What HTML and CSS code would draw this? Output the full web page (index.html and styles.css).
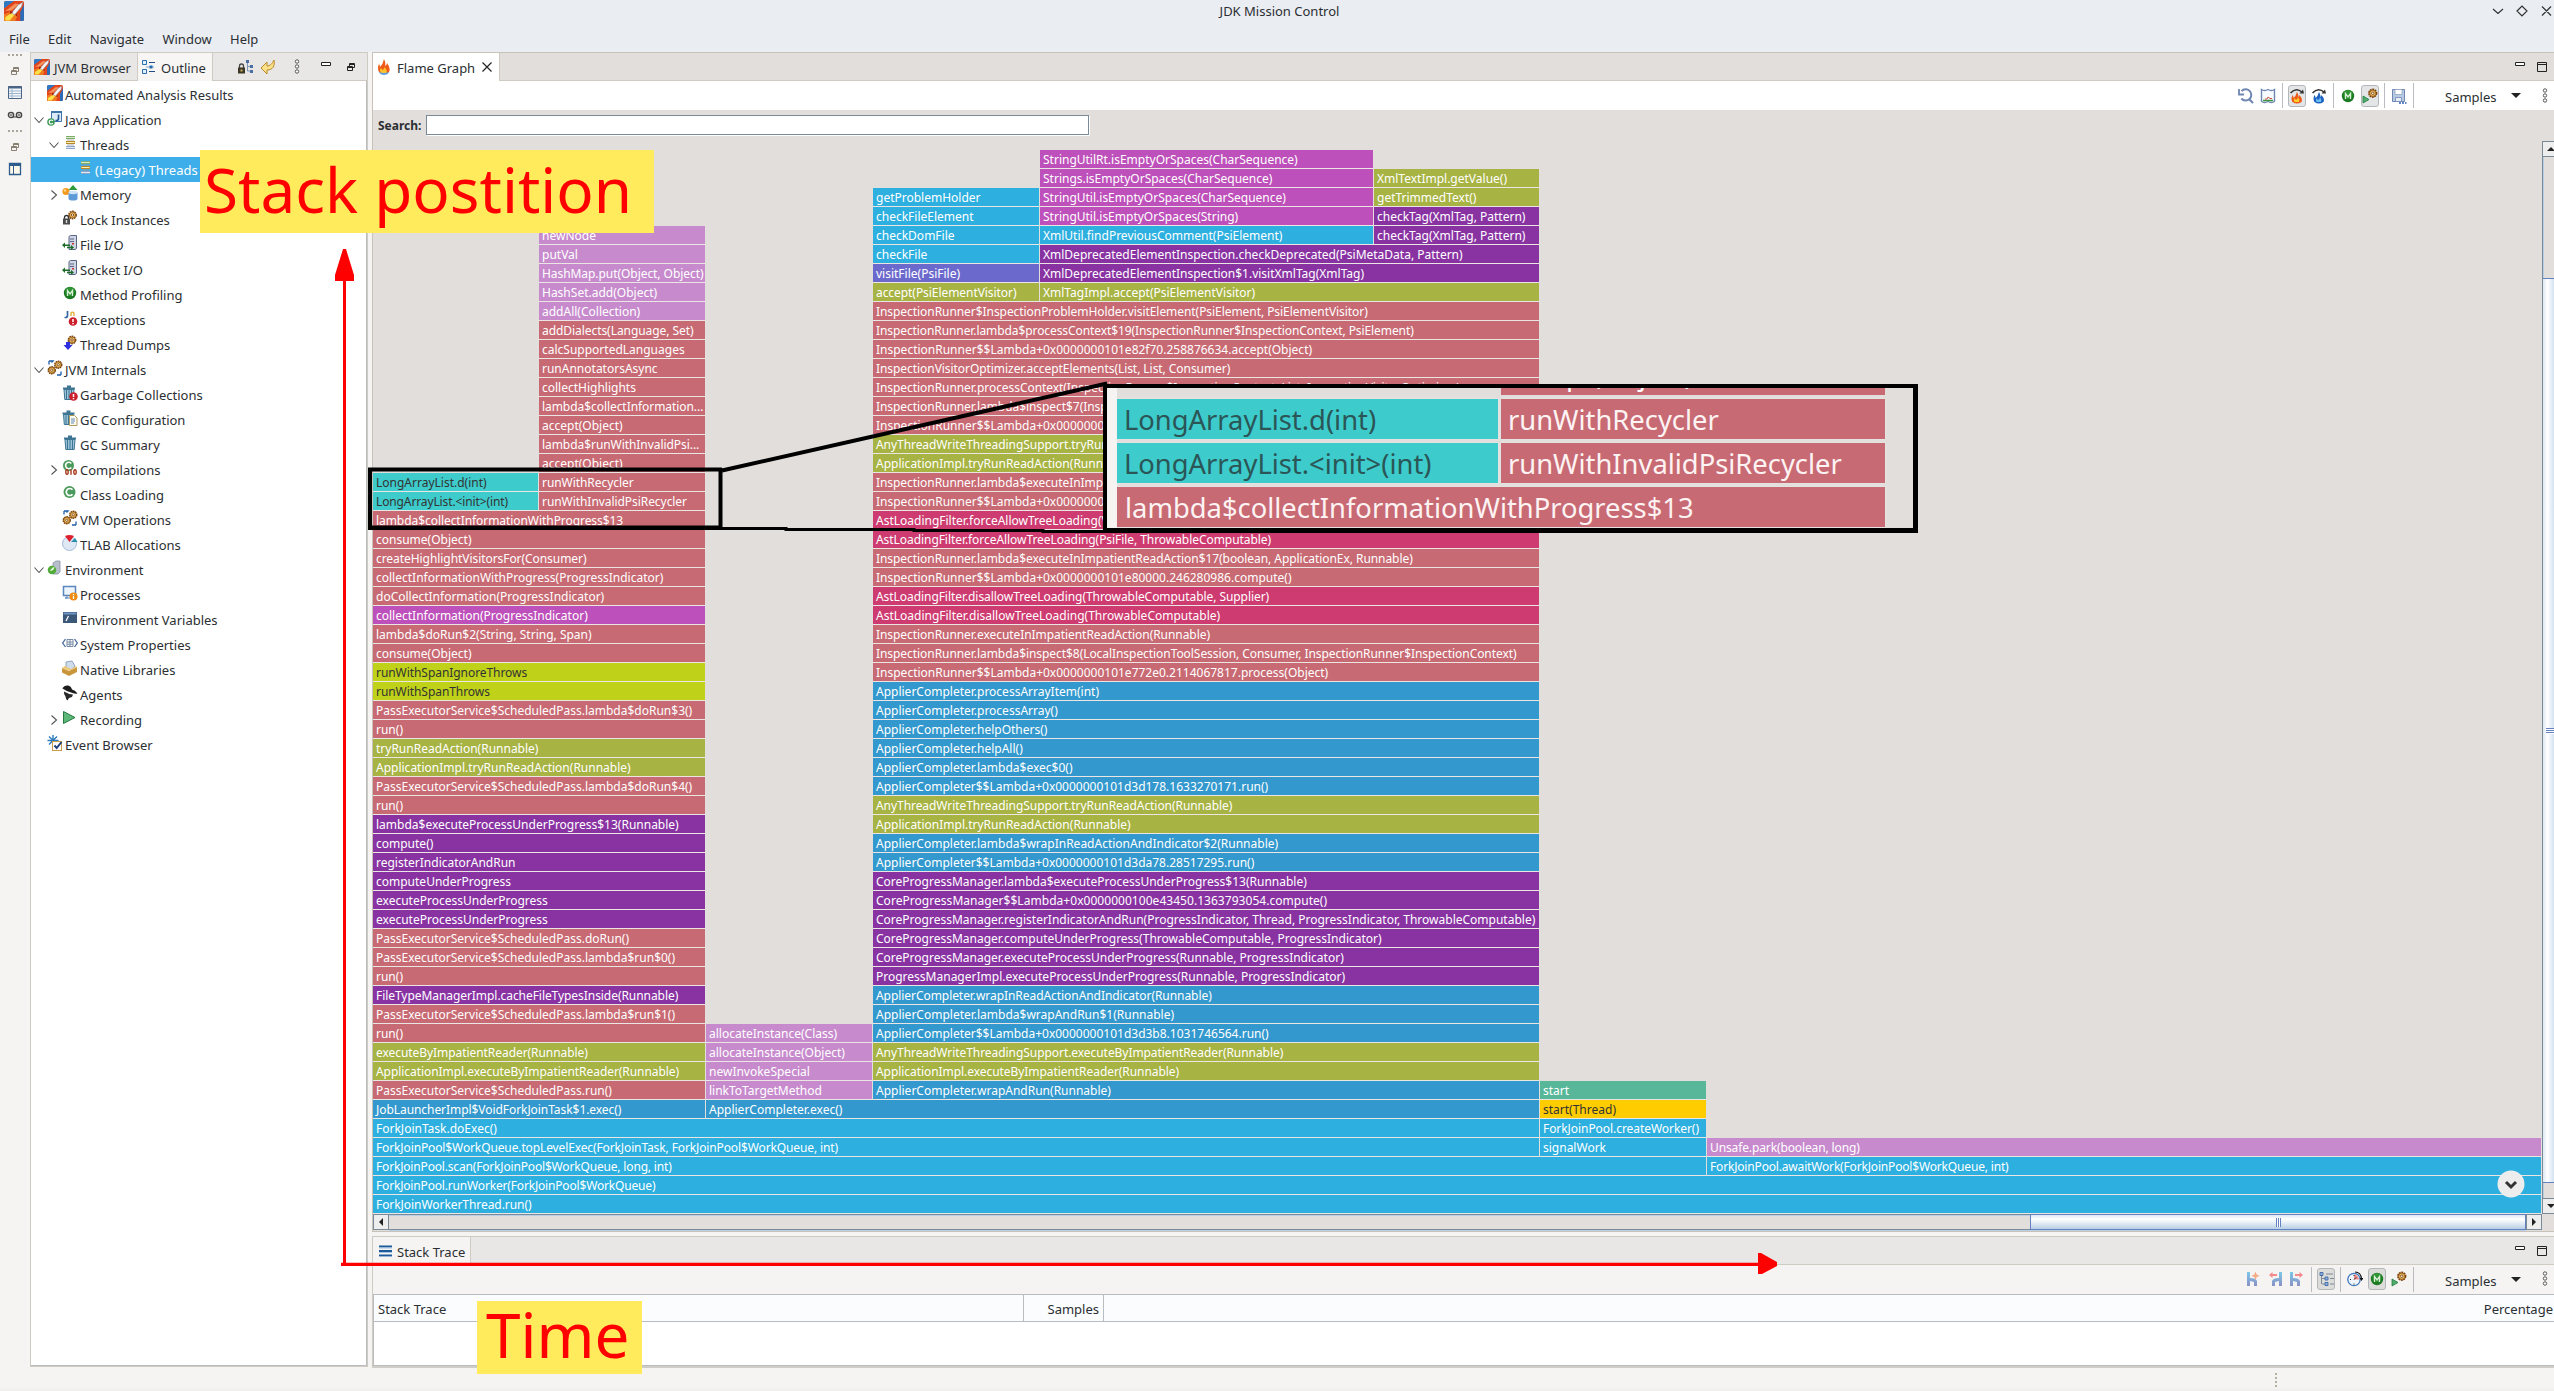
FILE: index.html
```html
<!DOCTYPE html>
<html lang="en">
<head>
<meta charset="utf-8">
<title>JDK Mission Control</title>
<link rel="stylesheet" href="styles.css">
</head>
<body>
<svg class="defs" width="0" height="0">
  <defs>
    <linearGradient id="gFork" x1="0" y1="0" x2="0" y2="1"><stop offset="0" stop-color="#7cc8e8"/><stop offset="1" stop-color="#8a90c4"/></linearGradient>
    <symbol id="rocket" viewBox="0 0 16 16"><rect width="16" height="16" rx="1.500" fill="#e2441c"/><path d="M0 6V1.500Q0 0 1.500 0H8z" fill="#2f79c4"/><path d="M16 3v11.500q0 1.500-1.500 1.500H13V9z" fill="#2a6cb8"/><path d="M1 8l8-6 3 .5-6 5z" fill="#f4925a"/><path d="M0 16v-5.500L7 8l4 3-2 5z" fill="#f07a1e"/><path d="M1 15.500v-2.500l6-4 1 2.500-3.500 4z" fill="#fde04a"/><path d="M6 9.500L11.500 3l3.500-2-1 3.500-5.500 6.500z" fill="#f4f5f8" stroke="#8a8f9c" stroke-width=".5"/><path d="M5 8l2.500.5-2.500 2zM9 11l1.500-1v2.500z" fill="#9a1c12"/></symbol>
    <symbol id="outline" viewBox="0 0 16 16"><path d="M1.500 1.500h4v4h-4zM1.500 10.500h4v4h-4z" fill="#e4f0fa" stroke="#2a6db0"/><path d="M8 3.500h6M8 12.500h6" stroke="#1f4e86" stroke-width="1.200"/><path d="M5 8h8" stroke="#7ea6cf"/><path d="M8.500 6.500h3v3h-3z" fill="#2a6db0"/></symbol>
    <symbol id="locktree" viewBox="0 0 16 16"><path d="M9.500 1v11M9.500 7.500h3M9.500 12h3" stroke="#7a96b8" fill="none"/><path d="M8 1h3v3H8zM12 6h3v3h-3zM12 11h3v3h-3z" fill="#4a6fa5"/><path d="M1.500 9V7a2 2 0 0 1 4 0v2" fill="none" stroke="#444" stroke-width="1.300"/><rect x="0" y="8.500" width="7" height="6" fill="#3c3627"/><rect x="2.500" y="10.500" width="2" height="2" fill="#c9b25c"/></symbol>
    <symbol id="linkback" viewBox="0 0 16 16"><path d="M14 1c1 6-1 10-7 10v4L1 9l6-6v4c3 0 5-2 7-6z" fill="#fbe08a" stroke="#b98a2a"/></symbol>
    <symbol id="kebab" viewBox="0 0 6 16"><g fill="#fff" stroke="#555" stroke-width="1"><circle cx="3" cy="2.500" r="1.700"/><circle cx="3" cy="7.500" r="1.700"/><circle cx="3" cy="12.500" r="1.700"/></g></symbol>
    <symbol id="min" viewBox="0 0 10 10"><path d="M.5.500h9v3h-9z" fill="#fff" stroke="#222"/></symbol>
    <symbol id="max" viewBox="0 0 10 10"><path d="M.5.500h9v9h-9zM.5 2.500h9" fill="none" stroke="#222"/></symbol>
    <symbol id="restore" viewBox="0 0 8 8"><path d="M2.500 3V.5h5v4H6M2.500 1.500h5" fill="none" stroke="currentColor"/><path d="M.5 3.500h5v4h-5zM.5 4.500h5" fill="none" stroke="currentColor"/></symbol>
    <symbol id="table" viewBox="0 0 16 16"><path d="M1.500 1.500h13v12h-13z" fill="#f4f8fc" stroke="#4a6484"/><path d="M1 2.500h14" stroke="#4a6484" stroke-width="2"/><path d="M2 6h12M2 8.500h12M2 11h12M5 3v10" stroke="#9db4cd"/></symbol>
    <symbol id="layout" viewBox="0 0 16 16"><path d="M2.500 2.500h11v11h-11z" fill="#fdf8ea" stroke="#2e5c8c" stroke-width="1.300"/><path d="M2 4h12" stroke="#2e5c8c" stroke-width="2"/><path d="M6.500 4v9" stroke="#2e5c8c"/></symbol>
    <symbol id="glasses" viewBox="0 0 16 16"><circle cx="4" cy="8" r="2.600" fill="#ddd" stroke="#444" stroke-width="1.400"/><circle cx="12" cy="8" r="2.600" fill="#ddd" stroke="#444" stroke-width="1.400"/><path d="M3 8h2M11 8h2M6 10h4" stroke="#444"/></symbol>
    <symbol id="down" viewBox="0 0 10 10"><path d="M.5 2.500l4.500 5 4.500-5" fill="none" stroke="#555" stroke-width="1.100"/></symbol>
    <symbol id="right" viewBox="0 0 10 10"><path d="M2.500.5l5 4.500-5 4.500" fill="none" stroke="#555" stroke-width="1.100"/></symbol>
    <symbol id="japp" viewBox="0 0 16 16"><path d="M4.500 1.500h10v10h-10z" fill="#dcebf8" stroke="#3f74ab"/><path d="M4 2h11" stroke="#3f74ab" stroke-width="2"/><path d="M11.500 4.500v4q0 2-2 2h-1" fill="none" stroke="#1f5590" stroke-width="1.600"/><circle cx="4" cy="12" r="3.800" fill="#3c9a56"/><path d="M5.800 10.800a2 2 0 1 0 0 2.400" fill="none" stroke="#fff" stroke-width="1.100"/></symbol>
    <symbol id="threads" viewBox="0 0 16 16"><rect x="4" y="1" width="9" height="3" fill="#7dac6e"/><path d="M4 2.500h9" stroke="#d6ebc4"/><rect x="4" y="6" width="9" height="3" fill="#b78a28"/><path d="M4.500 7.500h8" stroke="#fff2b4"/><rect x="4" y="11" width="9" height="3" fill="#8ea4c8"/><path d="M4 12.500h9" stroke="#dfe8f5"/><path d="M5 5h7M5 10h7" stroke="#999" stroke-width=".8"/></symbol>
    <symbol id="memory" viewBox="0 0 16 16"><circle cx="4" cy="6.500" r="3.600" fill="#f39a1e"/><circle cx="3" cy="5.500" r="1.200" fill="#fcd48a"/><path d="M11 0l4.500 5h-9z" fill="#2f9a3c"/><path d="M6.500 7.500v6q0 2 4.500 2t4.500-2v-6z" fill="#5d9bd8"/><ellipse cx="11" cy="7.500" rx="4.500" ry="1.700" fill="#cfe4f8"/></symbol>
    <symbol id="gear" viewBox="0 0 10 10"><circle cx="5" cy="5" r="3.600" fill="#f0b95a" stroke="#7a4510" stroke-width="1.700" stroke-dasharray="1.700 .6"/><circle cx="5" cy="5" r="2.900" fill="#f6c468" stroke="#8a5216" stroke-width=".7"/><circle cx="5" cy="5" r="1.200" fill="#fff" stroke="#7a4510" stroke-width=".9"/></symbol>
    <symbol id="lock" viewBox="0 0 16 16"><use href="#gear" x="5.500" y="0" width="10" height="10"/><path d="M2.500 9V7.500a2 2 0 0 1 4 0V9" fill="none" stroke="#333" stroke-width="1.300"/><rect x="1" y="8.500" width="7" height="6" fill="#4b4b4b"/><path d="M4.500 10v3" stroke="#ddd" stroke-width="1.400"/></symbol>
    <symbol id="fileio" viewBox="0 0 16 16"><path d="M7 1.500l1.500-1h6v13l-1.500 1H7z" fill="#cfd5e2" stroke="#5a6688"/><path d="M8 4h4M8 6.500h4" stroke="#5a6688"/><rect x="10" y="8" width="2" height="1.500" fill="#d03030"/><path d="M0 10l3-2.500v2h5v1.500H3v2zM12 12.500L9 10v1.800H5v1.500h4V15z" fill="#1f6b2a"/></symbol>
    <symbol id="meth" viewBox="0 0 16 16"><circle cx="8" cy="8" r="6.200" fill="#1c7a22"/><circle cx="8" cy="6.500" r="4.500" fill="#2f9433"/><path d="M5.500 11V5.500L8 9l2.500-3.500V11" fill="none" stroke="#d9f0d6" stroke-width="1.300"/></symbol>
    <symbol id="exc" viewBox="0 0 16 16"><path d="M5.500 1v4.500q0 2-2 2H2.500" fill="none" stroke="#3567a5" stroke-width="1.700"/><path d="M9 6V3q1.500-1.800 3 0v3" fill="none" stroke="#e0b23c" stroke-width="1.400"/><circle cx="11" cy="11.500" r="4.300" fill="#cc1f2c"/><path d="M11 9v3M11 13v1.200" stroke="#fff" stroke-width="1.500"/></symbol>
    <symbol id="dump" viewBox="0 0 16 16"><use href="#gear" x="5" y="0" width="10" height="10"/><path d="M4 7h4v3h2.500L6 15 1.500 10H4z" fill="#2d2fe0"/></symbol>
    <symbol id="gears" viewBox="0 0 16 16"><use href="#gear" x="6.500" y="0" width="9.500" height="9.500"/><use href="#gear" x="0" y="5.500" width="9.500" height="9.500"/><path d="M2 1h4L4.500 2.500M2 1v3.500M14 15h-4M14 15v-3.500" fill="none" stroke="#1f5ea8" stroke-width="1.300"/></symbol>
    <symbol id="trash" viewBox="0 0 16 16"><path d="M3 4.500h10l-.8 10H3.800z" fill="#9cc3da" stroke="#3d7592"/><path d="M5.500 5v9M8 5v9M10.500 5v9" stroke="#3d7592"/><path d="M2 3.500h12M6 1.500h4" stroke="#3d7592" stroke-width="1.800"/></symbol>
    <symbol id="gc" viewBox="0 0 16 16"><use href="#trash" x="-1" width="16" height="16"/><circle cx="11.500" cy="11.500" r="4.300" fill="#cc1f2c"/><path d="M11.500 9v3M11.500 13v1.200" stroke="#fff" stroke-width="1.500"/></symbol>
    <symbol id="gcconf" viewBox="0 0 16 16"><use href="#trash" x="-1.500" width="16" height="16"/><path d="M7.500 5.500h5l2.500 2.500v7.500H7.500z" fill="#fffdf2" stroke="#b09a5c"/><path d="M9 9h4M9 11h4M9 13h3" stroke="#5e86b8"/></symbol>
    <symbol id="cls" viewBox="0 0 16 16"><circle cx="7.500" cy="7" r="6" fill="#4a9a5c"/><path d="M10.500 4.800a3.500 3.500 0 1 0 0 4.400" fill="none" stroke="#fff" stroke-width="1.700"/></symbol>
    <symbol id="comp" viewBox="0 0 16 16"><circle cx="6.500" cy="5.500" r="5.500" fill="#4a9a5c"/><path d="M9.300 3.500a3.200 3.200 0 1 0 0 4" fill="none" stroke="#fff" stroke-width="1.600"/><g fill="#fff" stroke="#a63a1e" stroke-width="1.400"><ellipse cx="5" cy="12" rx="1.200" ry="2.300"/><path d="M9 9.500v5.300"/><ellipse cx="13" cy="12" rx="1.200" ry="2.300"/></g></symbol>
    <symbol id="tlab" viewBox="0 0 16 16"><circle cx="7.500" cy="8.500" r="7" fill="#dfe9f6" stroke="#8fabcf" stroke-width=".8"/><path d="M7.500 7L3 1q4.500-2 9 0z" fill="#dc1f2c"/><path d="M9 7l4-4 2.500 4z" fill="#2b8fae"/></symbol>
    <symbol id="env" viewBox="0 0 16 16"><path d="M6 3l3-2h4v11l-2 2H6z" fill="#b8bfcc" stroke="#8890a0" stroke-width=".8"/><circle cx="5" cy="10" r="4.300" fill="#52ac3a"/><path d="M3 11q2-4 4.500-4-.5 4-4.500 4z" fill="#e4f5d8"/></symbol>
    <symbol id="proc" viewBox="0 0 16 16"><path d="M1.500 1.500h12v9h-12z" fill="#eef4fb" stroke="#5a86bd" stroke-width="1.500"/><path d="M5 11v2H3h5" stroke="#5a86bd" fill="none"/><circle cx="11.500" cy="11.500" r="4" fill="#ef8a12"/><path d="M11.500 9v1.200M11.500 11v3" stroke="#fff" stroke-width="1.300"/></symbol>
    <symbol id="term" viewBox="0 0 16 16"><path d="M1 2h14v11H1z" fill="#3c5878"/><path d="M1.500 2.500h13v2h-13z" fill="#6f94c4"/><path d="M4 11l2.500-5" stroke="#fff" stroke-width="1.200"/></symbol>
    <symbol id="sysp" viewBox="0 0 16 16"><path d="M3.500 4L.7 8l2.800 4M12.500 4l2.800 4-2.800 4" fill="none" stroke="#4c6e9c" stroke-width="1.300"/><path d="M5 4.500h6v7H5zM5 7h6M5 9.200h6M8 4.500v7" fill="#fff" stroke="#6a7f9c" stroke-width=".9"/></symbol>
    <symbol id="native" viewBox="0 0 16 16"><path d="M4 2l6-1 3 5-4 4-5-2z" fill="#cfdcea" stroke="#7a94b4" stroke-width=".8"/><path d="M0 8l7 3 8-4v5l-8 4-7-3.500z" fill="#c9963c"/><path d="M0 8l3-2 6 3 5-3 1 1-8 4z" fill="#edc97c"/></symbol>
    <symbol id="agent" viewBox="0 0 16 16"><path d="M1 2.500Q3 0 6 .5q3 .5 4 4 3 .5 5.500 4-2 .5-5-.5-5-1-10-4.500z" fill="#1c1c1c"/><path d="M2 6.500q4 2.500 9 3l-1 2.500-3 1-1.500 2.500q-2-1.500-2-4-2-2-1.500-5z" fill="#2a2a2a"/></symbol>
    <symbol id="rec" viewBox="0 0 16 16"><path d="M1.500 1.500L13 7.500l-11.500 6z" fill="#5cb878" stroke="#257a42"/></symbol>
    <symbol id="evb" viewBox="0 0 16 16"><path d="M6 0v11M.5 5.500h11M2 1.500l8 8M10 1.500l-8 8" stroke="#2d7bbd" stroke-width="1.400"/><rect x="5.500" y="6.500" width="9" height="9" fill="#fff" stroke="#c99b4a"/><path d="M7.500 10.500l2.200 2.500L14.500 7" fill="none" stroke="#1f3f7a" stroke-width="2"/></symbol>
    <symbol id="flame" viewBox="0 0 16 16"><path d="M8 0q2 4 1 7 2-1 2-3 4 5 2 9-5 4-10 0-2-4 0-8 1 1 1 3 3-3 4-8z" fill="#ee5a1a"/><path d="M5 14q-2-3 0-5l1.500 2q2-1 2-3 3 3 2 6z" fill="#fcc12c"/><path d="M3 13q5 2 10 0-1 3-5 3t-5-3z" fill="#5f9fe0"/></symbol>
    <symbol id="flamef" viewBox="0 0 16 16"><path d="M8 4q2 3 1 5 1.500-1 1.500-2 3.500 4 2 7-4.500 3-9 0-2-3 0-7 1 1 1 3 2.500-2 3.500-6z" fill="#ee5a1a"/><path d="M5.500 14q-1-2 0-4l1.500 2q2-1 2-3 2 3 1 5z" fill="#fcd02c"/><path d="M1.500 5Q7-1 13 4" fill="none" stroke="#333" stroke-width="1.600"/><path d="M15 5.500l-4.500 0L14 1.500z" fill="#333"/></symbol>
    <symbol id="flameb" viewBox="0 0 16 16"><path d="M8 4q2 3 1 5 1.500-1 1.500-2 3.500 4 2 7-4.500 3-9 0-2-3 0-7 1 1 1 3 2.500-2 3.500-6z" fill="#1d62c0"/><path d="M5.500 14q-1-2 0-4l1.500 2q2-1 2-3 2 3 1 5z" fill="#6dbcf4"/><path d="M1.500 5Q7-1 13 4" fill="none" stroke="#333" stroke-width="1.600"/><path d="M15 5.500l-4.500 0L14 1.500z" fill="#333"/></symbol>
    <symbol id="reset" viewBox="0 0 16 16"><path d="M3.500 3.200A5.600 5.600 0 1 1 3.400 10.500" fill="none" stroke="#6f86b2" stroke-width="2"/><path d="M1 1v5.500h5" fill="none" stroke="#6f86b2" stroke-width="1.800"/><path d="M11 11l4 4" stroke="#6f86b2" stroke-width="2.200"/></symbol>
    <symbol id="map" viewBox="0 0 16 16"><path d="M1.500 1.500q3 2 6.500 0 3.500 2 6.500 0v12q-3 2-6.500 0-3.500 2-6.500 0z" fill="#f8fafd" stroke="#6f86b2" stroke-width="1.400"/><path d="M3 12.500h10" stroke="#3b9440" stroke-width="1.500"/><path d="M5 11h2l1-2 2 1.500h2" fill="none" stroke="#cc5544"/></symbol>
    <symbol id="rungear" viewBox="0 0 16 16"><use href="#gear" x="5.500" y="0" width="10.500" height="10.500"/><path d="M1 8l6 3.500L1 15z" fill="#4fae6e" stroke="#1f7a3c" stroke-width=".8"/></symbol>
    <symbol id="save" viewBox="0 0 16 16"><path d="M1.500 1.500h12v12h-12z" fill="#b9cbe2" stroke="#6f86b2"/><path d="M4 1.500h7v5H4z" fill="#fff" stroke="#8fa2c2" stroke-width=".8"/><path d="M4.500 9.500h6v4h-6z" fill="#e8eef6" stroke="#6f86b2" stroke-width=".8"/><path d="M8 15h7.500" stroke="#2f5fb5" stroke-width="1.600" stroke-dasharray="2 1"/></symbol>
    <symbol id="fork1" viewBox="0 0 16 16"><path d="M1 1h3v6q6 0 7 3v5H8v-4L4 10v5H1z" fill="url(#gFork)"/><path d="M9.500.5l1.200 3 3 1.200-3 1.200-1.200 3-1.200-3-3-1.200 3-1.200z" fill="#f8aa84"/></symbol>
    <symbol id="fork2" viewBox="0 0 16 16"><path d="M14 1h-3v6q-6 0-7 3v5h3v-4l4-1v5h3z" fill="url(#gFork)"/><path d="M1 4l3.500-3v2H9v2H4.500v2z" fill="#f48a8a"/></symbol>
    <symbol id="fork3" viewBox="0 0 16 16"><path d="M1 1h3v6q6 0 7 3v5H8v-4L4 10v5H1z" fill="url(#gFork)"/><path d="M14 4l-3.500-3v2H6v2h4.500v2z" fill="#f48a8a"/></symbol>
    <symbol id="treev" viewBox="0 0 16 16"><path d="M3.500 3v10M4 7.500h4M4 13h4M8 3h7M12 7.500h4M12 13h4" stroke="#7d8896" fill="none"/><path d="M2 1.500h3v3H2zM7 6h3v3H7zM7 11.500h3v3H7z" fill="#8fb0dc" stroke="#3f69a6" stroke-width=".9"/></symbol>
    <symbol id="clock" viewBox="0 0 16 16"><circle cx="7" cy="8.500" r="6.200" fill="#eef5fc" stroke="#3f78bd" stroke-width="1.300"/><path d="M7 8.500V3.500q4 0 5 5z" fill="#ee8a8a"/><path d="M7 4v1M7 12.500v1M3 8.500h1M7 8.500l2-2" stroke="#222"/><path d="M8 1q6 0 6.500 7" fill="none" stroke="#111" stroke-width="1.200"/><path d="M12.500 7h4l-2 3z" fill="#111"/></symbol>
  </defs>
</svg>

<header class="titlebar">
  <svg class="appicon"><use href="#rocket"/></svg>
  <span class="title">JDK Mission Control</span>
  <svg class="winbtns" viewBox="0 0 60 12"><path d="M1 4l5 4.500L11 4M25 6l5-5 5 5-5 5zM50 1.500l9 9M59 1.500l-9 9" fill="none" stroke="#333" stroke-width="1.200"/></svg>
</header>
<nav class="menubar"><span>File</span><span>Edit</span><span>Navigate</span><span>Window</span><span>Help</span></nav>

<div class="workbench">
  <aside class="trim">
    <i class="grip"></i>
    <svg class="s8"><use href="#restore"/></svg>
    <svg class="s16"><use href="#table"/></svg>
    <svg class="s16"><use href="#glasses"/></svg>
    <i class="grip"></i>
    <svg class="s8"><use href="#restore"/></svg>
    <svg class="s16"><use href="#layout"/></svg>
  </aside>

  <section class="outline">
    <div class="tabs">
      <div class="tab jvm"><svg class="i16"><use href="#rocket"/></svg><span>JVM Browser</span></div>
      <div class="tab on"><svg class="i16"><use href="#outline"/></svg><span>Outline</span></div>
      <div class="acts">
        <svg class="i16"><use href="#locktree"/></svg>
        <svg class="i16"><use href="#linkback"/></svg>
        <svg class="keb"><use href="#kebab"/></svg>
        <svg class="mm up"><use href="#min"/></svg>
        <svg class="s8"><use href="#restore"/></svg>
      </div>
    </div>
    <ul class="tree">
      <li class="l1"><b></b><svg class="i16"><use href="#rocket"/></svg>Automated Analysis Results</li>
      <li class="l1"><b><svg><use href="#down"/></svg></b><svg class="i16"><use href="#japp"/></svg>Java Application</li>
      <li class="l2"><b><svg><use href="#down"/></svg></b><svg class="i16"><use href="#threads"/></svg>Threads</li>
      <li class="l3 sel"><b></b><svg class="i16"><use href="#threads"/></svg>(Legacy) Threads</li>
      <li class="l2"><b><svg><use href="#right"/></svg></b><svg class="i16"><use href="#memory"/></svg>Memory</li>
      <li class="l2"><b></b><svg class="i16"><use href="#lock"/></svg>Lock Instances</li>
      <li class="l2"><b></b><svg class="i16"><use href="#fileio"/></svg>File I/O</li>
      <li class="l2"><b></b><svg class="i16"><use href="#fileio"/></svg>Socket I/O</li>
      <li class="l2"><b></b><svg class="i16"><use href="#meth"/></svg>Method Profiling</li>
      <li class="l2"><b></b><svg class="i16"><use href="#exc"/></svg>Exceptions</li>
      <li class="l2"><b></b><svg class="i16"><use href="#dump"/></svg>Thread Dumps</li>
      <li class="l1"><b><svg><use href="#down"/></svg></b><svg class="i16"><use href="#gears"/></svg>JVM Internals</li>
      <li class="l2"><b></b><svg class="i16"><use href="#gc"/></svg>Garbage Collections</li>
      <li class="l2"><b></b><svg class="i16"><use href="#gcconf"/></svg>GC Configuration</li>
      <li class="l2"><b></b><svg class="i16"><use href="#trash"/></svg>GC Summary</li>
      <li class="l2"><b><svg><use href="#right"/></svg></b><svg class="i16"><use href="#comp"/></svg>Compilations</li>
      <li class="l2"><b></b><svg class="i16"><use href="#cls"/></svg>Class Loading</li>
      <li class="l2"><b></b><svg class="i16"><use href="#gears"/></svg>VM Operations</li>
      <li class="l2"><b></b><svg class="i16"><use href="#tlab"/></svg>TLAB Allocations</li>
      <li class="l1"><b><svg><use href="#down"/></svg></b><svg class="i16"><use href="#env"/></svg>Environment</li>
      <li class="l2"><b></b><svg class="i16"><use href="#proc"/></svg>Processes</li>
      <li class="l2"><b></b><svg class="i16"><use href="#term"/></svg>Environment Variables</li>
      <li class="l2"><b></b><svg class="i16"><use href="#sysp"/></svg>System Properties</li>
      <li class="l2"><b></b><svg class="i16"><use href="#native"/></svg>Native Libraries</li>
      <li class="l2"><b></b><svg class="i16"><use href="#agent"/></svg>Agents</li>
      <li class="l2"><b><svg><use href="#right"/></svg></b><svg class="i16"><use href="#rec"/></svg>Recording</li>
      <li class="l1"><b></b><svg class="i16"><use href="#evb"/></svg>Event Browser</li>
    </ul>
  </section>

  <main class="right">
    <section class="editor">
      <div class="tabs">
        <div class="tab on"><svg class="i16"><use href="#flame"/></svg><span>Flame Graph</span><svg class="x" viewBox="0 0 10 10"><path d="M.5.500l9 9M9.500.5l-9 9" stroke="#222" stroke-width="1.200"/></svg></div>
        <div class="acts"><svg class="mm up"><use href="#min"/></svg><svg class="mm"><use href="#max"/></svg></div>
      </div>
      <div class="toolbar">
        <div class="c"><svg class="i16"><use href="#reset"/></svg></div>
        <div class="c"><svg class="i16"><use href="#map"/></svg></div>
        <div class="sep"></div>
        <div class="c"><div class="btn"><svg class="i16"><use href="#flamef"/></svg></div></div>
        <div class="c"><svg class="i16"><use href="#flameb"/></svg></div>
        <div class="sep"></div>
        <div class="c"><svg class="i16"><use href="#meth"/></svg></div>
        <div class="c"><div class="btn"><svg class="i16"><use href="#rungear"/></svg></div></div>
        <div class="sep"></div>
        <div class="c"><svg class="i16"><use href="#save"/></svg></div>
        <div class="sep"></div>
        <div class="drop"><span>Samples</span><i></i></div>
        <svg class="keb"><use href="#kebab"/></svg>
      </div>
      <div class="search"><label>Search:</label><div class="field"></div></div>
      <div class="view">
        <div class="flame">
          <div class="row">
            <div class="stack" style="width:1334px">
              <div class="row">
                <div class="stack" style="width:1167px">
                  <div class="row">
                    <div class="stack" style="width:333px">
                      <div class="row">
                        <div class="stack" style="width:166px">
                          <p class="teal">LongArrayList.d(int)</p>
                          <p class="teal k2">LongArrayList.&lt;init&gt;(int)</p>
                        </div>
                        <div class="stack" style="width:167px">
                          <p class="lilac">newNode</p>
                          <p class="lilac">putVal</p>
                          <p class="lilac k1">HashMap.put(Object, Object)</p>
                          <p class="lilac">HashSet.add(Object)</p>
                          <p class="lilac">addAll(Collection)</p>
                          <p class="rose k1">addDialects(Language, Set)</p>
                          <p class="rose">calcSupportedLanguages</p>
                          <p class="rose">runAnnotatorsAsync</p>
                          <p class="rose">collectHighlights</p>
                          <p class="rose k1">lambda$collectInformation...</p>
                          <p class="rose">accept(Object)</p>
                          <p class="rose k1">lambda$runWithInvalidPsi...</p>
                          <p class="rose">accept(Object)</p>
                          <p class="rose k1">runWithRecycler</p>
                          <p class="rose k1">runWithInvalidPsiRecycler</p>
                        </div>
                      </div>
                      <p class="rose k1">lambda$collectInformationWithProgress$13</p>
                      <p class="rose">consume(Object)</p>
                      <p class="rose k1">createHighlightVisitorsFor(Consumer)</p>
                      <p class="rose">collectInformationWithProgress(ProgressIndicator)</p>
                      <p class="rose">doCollectInformation(ProgressIndicator)</p>
                      <p class="orchid">collectInformation(ProgressIndicator)</p>
                      <p class="rose">lambda$doRun$2(String, String, Span)</p>
                      <p class="rose">consume(Object)</p>
                      <p class="lime k1">runWithSpanIgnoreThrows</p>
                      <p class="lime k1">runWithSpanThrows</p>
                      <p class="rose">PassExecutorService$ScheduledPass.lambda$doRun$3()</p>
                      <p class="rose">run()</p>
                      <p class="olive">tryRunReadAction(Runnable)</p>
                      <p class="olive">ApplicationImpl.tryRunReadAction(Runnable)</p>
                      <p class="rose">PassExecutorService$ScheduledPass.lambda$doRun$4()</p>
                      <p class="rose">run()</p>
                      <p class="purple">lambda$executeProcessUnderProgress$13(Runnable)</p>
                      <p class="purple">compute()</p>
                      <p class="purple">registerIndicatorAndRun</p>
                      <p class="purple">computeUnderProgress</p>
                      <p class="purple">executeProcessUnderProgress</p>
                      <p class="purple">executeProcessUnderProgress</p>
                      <p class="rose">PassExecutorService$ScheduledPass.doRun()</p>
                      <p class="rose">PassExecutorService$ScheduledPass.lambda$run$0()</p>
                      <p class="rose">run()</p>
                      <p class="purple k1">FileTypeManagerImpl.cacheFileTypesInside(Runnable)</p>
                      <p class="rose">PassExecutorService$ScheduledPass.lambda$run$1()</p>
                      <p class="rose">run()</p>
                      <p class="olive k1">executeByImpatientReader(Runnable)</p>
                      <p class="olive k1">ApplicationImpl.executeByImpatientReader(Runnable)</p>
                      <p class="rose">PassExecutorService$ScheduledPass.run()</p>
                      <p class="blue k1">JobLauncherImpl$VoidForkJoinTask$1.exec()</p>
                    </div>
                    <div class="stack" style="width:834px">
                      <div class="row">
                        <div class="stack" style="width:167px">
                          <p class="lilac">allocateInstance(Class)</p>
                          <p class="lilac">allocateInstance(Object)</p>
                          <p class="lilac">newInvokeSpecial</p>
                          <p class="lilac">linkToTargetMethod</p>
                        </div>
                        <div class="stack" style="width:667px">
                          <div class="row">
                            <div class="stack" style="width:167px">
                              <p class="sky">getProblemHolder</p>
                              <p class="sky">checkFileElement</p>
                              <p class="sky">checkDomFile</p>
                              <p class="sky">checkFile</p>
                              <p class="slate">visitFile(PsiFile)</p>
                              <p class="olive k1">accept(PsiElementVisitor)</p>
                            </div>
                            <div class="stack" style="width:500px">
                              <div class="row">
                                <div class="stack" style="width:334px">
                                  <p class="orchid">StringUtilRt.isEmptyOrSpaces(CharSequence)</p>
                                  <p class="orchid">Strings.isEmptyOrSpaces(CharSequence)</p>
                                  <p class="orchid">StringUtil.isEmptyOrSpaces(CharSequence)</p>
                                  <p class="orchid">StringUtil.isEmptyOrSpaces(String)</p>
                                  <p class="sky">XmlUtil.findPreviousComment(PsiElement)</p>
                                </div>
                                <div class="stack" style="width:166px">
                                  <p class="olive">XmlTextImpl.getValue()</p>
                                  <p class="olive">getTrimmedText()</p>
                                  <p class="purple">checkTag(XmlTag, Pattern)</p>
                                  <p class="purple">checkTag(XmlTag, Pattern)</p>
                                </div>
                              </div>
                              <p class="purple">XmlDeprecatedElementInspection.checkDeprecated(PsiMetaData, Pattern)</p>
                              <p class="purple">XmlDeprecatedElementInspection$1.visitXmlTag(XmlTag)</p>
                              <p class="olive">XmlTagImpl.accept(PsiElementVisitor)</p>
                            </div>
                          </div>
                          <p class="rose k1">InspectionRunner$InspectionProblemHolder.visitElement(PsiElement, PsiElementVisitor)</p>
                          <p class="rose k15">InspectionRunner.lambda$processContext$19(InspectionRunner$InspectionContext, PsiElement)</p>
                          <p class="rose">InspectionRunner$$Lambda+0x0000000101e82f70.258876634.accept(Object)</p>
                          <p class="rose k1">InspectionVisitorOptimizer.acceptElements(List, List, Consumer)</p>
                          <p class="rose k1">InspectionRunner.processContext(InspectionRunner$InspectionContext, List, InspectionVisitorOptimizer)</p>
                          <p class="rose k1">InspectionRunner.lambda$inspect$7(InspectionRunner)</p>
                          <p class="rose">InspectionRunner$$Lambda+0x0000000101</p>
                          <p class="olive k1">AnyThreadWriteThreadingSupport.tryRunReadAction(Runnable)</p>
                          <p class="olive">ApplicationImpl.tryRunReadAction(Runnable)</p>
                          <p class="rose k1">InspectionRunner.lambda$executeInImpatientReadAction</p>
                          <p class="rose">InspectionRunner$$Lambda+0x0000000101</p>
                          <p class="pink">AstLoadingFilter.forceAllowTreeLoading(VirtualFile)</p>
                          <p class="pink k1">AstLoadingFilter.forceAllowTreeLoading(PsiFile, ThrowableComputable)</p>
                          <p class="rose k1">InspectionRunner.lambda$executeInImpatientReadAction$17(boolean, ApplicationEx, Runnable)</p>
                          <p class="rose">InspectionRunner$$Lambda+0x0000000101e80000.246280986.compute()</p>
                          <p class="pink k1">AstLoadingFilter.disallowTreeLoading(ThrowableComputable, Supplier)</p>
                          <p class="pink">AstLoadingFilter.disallowTreeLoading(ThrowableComputable)</p>
                          <p class="rose k1">InspectionRunner.executeInImpatientReadAction(Runnable)</p>
                          <p class="rose k1">InspectionRunner.lambda$inspect$8(LocalInspectionToolSession, Consumer, InspectionRunner$InspectionContext)</p>
                          <p class="rose">InspectionRunner$$Lambda+0x0000000101e772e0.2114067817.process(Object)</p>
                          <p class="blue">ApplierCompleter.processArrayItem(int)</p>
                          <p class="blue">ApplierCompleter.processArray()</p>
                          <p class="blue">ApplierCompleter.helpOthers()</p>
                          <p class="blue">ApplierCompleter.helpAll()</p>
                          <p class="blue">ApplierCompleter.lambda$exec$0()</p>
                          <p class="blue">ApplierCompleter$$Lambda+0x0000000101d3d178.1633270171.run()</p>
                          <p class="olive k1">AnyThreadWriteThreadingSupport.tryRunReadAction(Runnable)</p>
                          <p class="olive">ApplicationImpl.tryRunReadAction(Runnable)</p>
                          <p class="blue">ApplierCompleter.lambda$wrapInReadActionAndIndicator$2(Runnable)</p>
                          <p class="blue">ApplierCompleter$$Lambda+0x0000000101d3da78.28517295.run()</p>
                          <p class="purple">CoreProgressManager.lambda$executeProcessUnderProgress$13(Runnable)</p>
                          <p class="purple g1">CoreProgressManager$$Lambda+0x0000000100e43450.1363793054.compute()</p>
                          <p class="purple">CoreProgressManager.registerIndicatorAndRun(ProgressIndicator, Thread, ProgressIndicator, ThrowableComputable)</p>
                          <p class="purple">CoreProgressManager.computeUnderProgress(ThrowableComputable, ProgressIndicator)</p>
                          <p class="purple">CoreProgressManager.executeProcessUnderProgress(Runnable, ProgressIndicator)</p>
                          <p class="purple">ProgressManagerImpl.executeProcessUnderProgress(Runnable, ProgressIndicator)</p>
                          <p class="blue k1">ApplierCompleter.wrapInReadActionAndIndicator(Runnable)</p>
                          <p class="blue">ApplierCompleter.lambda$wrapAndRun$1(Runnable)</p>
                          <p class="blue">ApplierCompleter$$Lambda+0x0000000101d3d3b8.1031746564.run()</p>
                          <p class="olive k1">AnyThreadWriteThreadingSupport.executeByImpatientReader(Runnable)</p>
                          <p class="olive k1">ApplicationImpl.executeByImpatientReader(Runnable)</p>
                          <p class="blue">ApplierCompleter.wrapAndRun(Runnable)</p>
                        </div>
                      </div>
                      <p class="blue">ApplierCompleter.exec()</p>
                    </div>
                  </div>
                  <p class="sky">ForkJoinTask.doExec()</p>
                  <p class="sky k2">ForkJoinPool$WorkQueue.topLevelExec(ForkJoinTask, ForkJoinPool$WorkQueue, int)</p>
                </div>
                <div class="stack" style="width:167px">
                  <p class="green">start</p>
                  <p class="gold">start(Thread)</p>
                  <p class="sky k1">ForkJoinPool.createWorker()</p>
                  <p class="sky">signalWork</p>
                </div>
              </div>
              <p class="sky k3">ForkJoinPool.scan(ForkJoinPool$WorkQueue, long, int)</p>
            </div>
            <div class="stack" style="width:835px">
              <p class="lilac k2">Unsafe.park(boolean, long)</p>
              <p class="sky k3">ForkJoinPool.awaitWork(ForkJoinPool$WorkQueue, int)</p>
            </div>
          </div>
          <p class="sky k3">ForkJoinPool.runWorker(ForkJoinPool$WorkQueue)</p>
          <p class="sky k1">ForkJoinWorkerThread.run()</p>
          <svg class="scrollhint" viewBox="0 0 28 28"><circle cx="14" cy="14" r="13.500" fill="#ededee"/><path d="M9 12l5 5 5-5" fill="none" stroke="#333" stroke-width="3"/></svg>
        </div>
        <div class="vbar">
          <div class="arrow top"><svg viewBox="0 0 8 4"><path d="M0 4l4-4 4 4z"/></svg></div>
          <div class="thumb"><i></i></div>
          <div class="arrow bot"><svg viewBox="0 0 8 4"><path d="M0 0l4 4 4-4z"/></svg></div>
        </div>
      </div>
      <div class="hbar">
        <div class="arrow"><svg viewBox="0 0 4 8"><path d="M4 0L0 4l4 4z"/></svg></div>
        <div class="track"></div>
        <div class="thumb"><i></i></div>
        <div class="arrow"><svg viewBox="0 0 4 8"><path d="M0 0l4 4-4 4z"/></svg></div>
      </div>
    </section>

    <section class="trace">
      <div class="tabs">
        <div class="tab on"><svg class="stk" viewBox="0 0 13 12"><path d="M0 1.500h13M0 6h13M0 10.500h13" stroke="#1d5a9a" stroke-width="2"/><path d="M0 3h13M0 7.500h13M0 12h13" stroke="#a8c6e4"/></svg><span>Stack Trace</span></div>
        <div class="acts"><svg class="mm up"><use href="#min"/></svg><svg class="mm"><use href="#max"/></svg></div>
      </div>
      <div class="toolbar">
        <div class="c"><svg class="i16"><use href="#fork1"/></svg></div>
        <div class="c"><svg class="i16"><use href="#fork2"/></svg></div>
        <div class="c"><svg class="i16"><use href="#fork3"/></svg></div>
        <div class="sep"></div>
        <div class="c"><div class="btn"><svg class="i16"><use href="#treev"/></svg></div></div>
        <div class="sep"></div>
        <div class="c"><svg class="i16"><use href="#clock"/></svg></div>
        <div class="c"><div class="btn"><svg class="i16"><use href="#meth"/></svg></div></div>
        <div class="c"><svg class="i16"><use href="#rungear"/></svg></div>
        <div class="sep"></div>
        <div class="drop"><span>Samples</span><i></i></div>
        <svg class="keb"><use href="#kebab"/></svg>
      </div>
      <div class="thead"><span class="t1">Stack Trace</span><span class="t2">Samples</span><span class="t3">Percentage</span></div>
      <div class="tbody"></div>
    </section>
  </main>
</div>
<footer class="status"><i></i></footer>

<div class="inset">
  <div class="icol">
    <div class="half"></div>
    <div class="cell teal">LongArrayList.d(int)</div>
    <div class="cell teal">LongArrayList.&lt;init&gt;(int)</div>
  </div>
  <div class="icol wide">
    <div class="half rose"><span>accept(Object)</span></div>
    <div class="cell rose">runWithRecycler</div>
    <div class="cell rose">runWithInvalidPsiRecycler</div>
  </div>
  <div class="cell rose last">lambda$collectInformationWithProgress$13</div>
</div>
<svg class="marks" viewBox="0 0 2554 1391">
  <g fill="none" stroke="#000">
    <path d="M370 469.500V528M368 469.500H722M720.500 468V530" stroke-width="4"/>
    <path d="M368 527.800H722" stroke-width="4.500"/>
    <path d="M722 470.500L1107 383.500" stroke-width="4"/>
    <path d="M722 528.500H786V529.500H914V530.500H1043V531.500H1106" stroke-width="3"/>
  </g>
  <g fill="#f00">
    <path d="M343 278h3v985h-3zM343 249h3l8 26v6h-19v-6z"/>
    <path d="M341 1262.700h1419v3.300H341zM1758 1253h3l16 9v4l-15 8h-4z"/>
  </g>
</svg>
<div class="note stackpos">Stack postition</div>
<div class="note time">Time</div>
</body>
</html>
```
FILE: styles.css
```css
* { box-sizing: border-box; }
body { margin: 0; width: 2554px; height: 1391px; overflow: hidden; position: relative; display: flex; flex-direction: column; background: #f5f4f2; color: #2b2f33; font: 13px/18px "Noto Sans", sans-serif; }
.defs { position: absolute; }
p, ul { margin: 0; padding: 0; }
svg { flex: none; display: block; }
.i16, .s16 { width: 16px; height: 16px; }
.s8 { width: 8px; height: 8px; color: #222; }
.keb { width: 6px; height: 16px; }
.mm { width: 10px; height: 10px; }

.titlebar { height: 24px; background: #eaedf2; display: flex; align-items: flex-start; }
.appicon { width: 20px; height: 20px; margin: 1px 0 0 4px; }
.title { flex: 1; text-align: center; padding: 2px 0 0 93px; }
.winbtns { width: 60px; height: 12px; margin: 5px 2px 0 50px; }
.menubar { height: 28px; background: #eaedf2; display: flex; gap: 18.300px; padding: 6px 0 0 9px; }

.workbench { display: flex; height: 1316px; }
.trim { width: 30px; display: flex; flex-direction: column; align-items: center; padding-top: 2px; }
.trim .grip { width: 14px; height: 2px; background: repeating-linear-gradient(90deg, #aaa59b 0 2px, transparent 2px 4px); margin-bottom: 11px; }
.trim .s8 { color: #888070; margin-bottom: 10px; }
.trim .s16 { margin-bottom: 6px; }
.trim .s16 + .grip { margin-top: 1px; }

.outline { width: 338px; height: 1315px; margin-right: 4px; border: 1px solid #cfcac2; display: flex; flex-direction: column; background: #e8e7e5; }
.tabs { display: flex; height: 28px; border-bottom: 1px solid #cfcac2; flex: none; background: #e8e7e5; }
.tab { display: flex; align-items: center; margin-bottom: -1px; border-right: 1px solid #cfcac2; padding: 0 5px 0 3px; gap: 4px; white-space: nowrap; }
.tab span { position: relative; top: 1px; }
.tab.jvm { margin-bottom: 0; width: 107px; }
.outline .tab.on { width: 75px; background: #f7f6f5; }
.acts { margin-left: auto; display: flex; align-items: center; }
.outline .acts { padding-right: 12px; }
.outline .acts .i16 { margin-right: 6px; }
.outline .acts .keb { margin: 0 21px 0 12px; }
.outline .acts .up { margin: 0 16px 0 0; }
.tree { list-style: none; background: #fff; flex: 1; border: 1px solid #b9bcc0; border-width: 0 1px 1px 0; padding-top: 1px; }
.tree li { height: 25px; display: flex; align-items: center; white-space: nowrap; line-height: 25px; padding-top: 1px; }
.tree li b { width: 13px; display: flex; }
.tree li b svg { width: 10px; height: 10px; }
.tree .i16 { margin: -4px 2px 0 0; }
.tree .l1 { padding-left: 3px; }
.tree .l2 { padding-left: 18px; }
.tree .l3 { padding-left: 33px; }
.tree .sel { background: #3daee9; color: #fff; }

.right { flex: 1; min-width: 0; display: flex; flex-direction: column; }
.editor { height: 1180px; border: 1px solid #c9c2b9; border-right: 0; background: #e1dedb; display: flex; flex-direction: column; }
.editor .tabs { background: #e1dedb; }
.editor .tab { width: 127px; background: #fff; gap: 5px; }
.editor .tab .x { width: 10px; height: 10px; margin: -1px 0 0 2px; }
.right .acts { gap: 12px; padding-right: 7px; }
.toolbar { height: 29px; display: flex; align-items: center; justify-content: flex-end; flex: none; }
.editor .toolbar { background: #fff; }
.toolbar .c { width: 22px; display: flex; justify-content: center; }
.sep { width: 7px; height: 25px; background: linear-gradient(#b9bcc0, #b9bcc0) 3px 0 / 1px 100% no-repeat; }
.btn { width: 18px; height: 22px; border: 1px solid #b4b7ba; border-radius: 3px; background: #e3e5e6; display: flex; align-items: center; justify-content: center; }
.trace .btn { background: #dcdcda; }
.drop { width: 108px; padding: 3px 4px 0 28px; display: flex; justify-content: space-between; align-items: center; }
.drop i { border: 5px solid transparent; border-top-color: #222; border-bottom: 0; margin-top: -3px; }
.toolbar .keb { margin: 0 6px 0 17px; }
.search { height: 31px; display: flex; align-items: center; padding-left: 5px; flex: none; }
.search label { font-weight: 700; font-size: 12px; width: 48px; padding-top: 1px; }
.field { width: 663px; height: 20px; background: #fff; border: 1px solid #7a8a99; box-shadow: 1px 1px 0 #fff; margin-bottom: 1px; }
.view { display: flex; height: 1073px; }
.flame { width: 2169px; display: flex; flex-direction: column; justify-content: flex-end; position: relative; }
.row { display: flex; align-items: flex-end; flex: none; }
.stack { flex: none; display: flex; flex-direction: column; }
.flame p { height: 18px; margin: 0 1px 1px 0; padding: 1px 0 0 3px; font-size: 12px; line-height: 18px; white-space: nowrap; overflow: hidden; color: #fff; box-shadow: 0 1px 0 #ebe6e3; }
.flame .teal, .flame .lime, .flame .gold { color: #333; }
/* tracking steps for the frame labels */
.flame .g1 { letter-spacing: .04px; }
.flame .k1 { letter-spacing: -.06px; }
.flame .k15 { letter-spacing: -.09px; }
.flame .k2 { letter-spacing: -.12px; }
.flame .k3 { letter-spacing: -.17px; }
.rose { background: #c86a73; }
.lilac { background: #c78bcd; }
.sky { background: #2dafdf; }
.blue { background: #3398cd; }
.olive { background: #a7b343; }
.purple { background: #8933a3; }
.orchid { background: #bd50ba; }
.pink { background: #cd3b70; }
.lime { background: #bfd118; }
.teal { background: #3dcbcb; }
.slate { background: #6c69cd; }
.green { background: #59b799; }
.gold { background: #ffcc00; }
.scrollhint { position: absolute; width: 28px; height: 28px; left: 2124px; bottom: 16px; }
.vbar { flex: 1; border-left: 1px solid #7a8a99; border-top: 1px solid #7a8a99; display: flex; flex-direction: column; box-shadow: inset 1px 0 #b8cfe5; overflow: hidden; }
.arrow { display: flex; align-items: center; justify-content: center; background: #eee; border: 1px solid #7a8a99; }
.arrow path { fill: #222; }
.vbar .arrow { height: 15px; width: 16px; border-width: 0 0 1px 0; flex: none; }
.vbar .arrow svg { width: 8px; height: 4px; }
.vbar .top { margin-bottom: 121px; }
.vbar .bot { margin-top: auto; border-top-width: 1px; height: 16px; }
.vbar .thumb { height: 905px; margin-left: -1px; width: 17px; border: 1px solid #6382bf; background: linear-gradient(90deg, #dde8f3, #fff 30%, #b8cfe5); display: flex; align-items: center; padding-left: 3px; flex: none; }
.vbar .thumb i { width: 10px; height: 6px; background: repeating-linear-gradient(#6382bf 0 1px, #fff 1px 2px); }
.hbar { height: 17px; width: 2169px; display: flex; }
.hbar .arrow { width: 16px; height: 16px; }
.hbar .arrow svg { width: 4px; height: 8px; }
.hbar .track { width: 1641px; height: 16px; border-top: 1px solid #7a8a99; border-bottom: 1px solid #7a8a99; box-shadow: inset 0 1px #b8cfe5, 0 1px #b8cfe5; }
.hbar .thumb { width: 496px; height: 16px; border: 1px solid #6382bf; background: linear-gradient(#dde8f3, #fff 30%, #b8cfe5); display: flex; align-items: center; justify-content: center; box-shadow: 0 1px #b8cfe5; }
.hbar .thumb i { width: 5px; height: 9px; background: repeating-linear-gradient(90deg, #6382bf 0 1px, #fff 1px 2px); }

.trace { margin-top: 4px; height: 132px; border: 1px solid #cfcac2; border-right: 0; border-bottom: 2px solid #d0ccc7; display: flex; flex-direction: column; }
.trace .tab.on { width: 98px; background: #f5f4f2; padding-left: 6px; gap: 5px; }
.stk { width: 13px; height: 12px; }
.trace .toolbar { padding-bottom: 1px; }
.trace .c:nth-child(1), .trace .c:nth-child(2) { padding-left: 2px; }
.thead { height: 28px; border: 1px solid #b9bcc0; border-right: 0; background: #fafcfe; display: flex; flex: none; line-height: 28px; }
.t1 { width: 650px; border-right: 1px solid #b9bcc0; padding-left: 4px; }
.t2 { width: 80px; border-right: 1px solid #b9bcc0; padding-right: 4px; text-align: right; }
.t3 { flex: 1; text-align: right; padding-right: 1px; }
.tbody { flex: 1; background: #fff; border: 1px solid #b9bcc0; border-top: 0; border-right: 0; }
.status { height: 23px; padding: 5px 0 0 2275px; background: linear-gradient(#f5f4f2 80%, #efeeec); }
.status i { display: block; width: 2px; height: 14px; background: repeating-linear-gradient(#b5b09f 0 2px, transparent 2px 4px); }

.inset { position: absolute; left: 1103px; top: 384px; width: 815px; height: 149px; border: 4px solid #000; border-width: 4px 5px 5px 4px; background: linear-gradient(90deg, #f5f4f2 10px, #e1dedb 10px); padding-left: 10px; display: flex; flex-wrap: wrap; align-content: flex-start; overflow: hidden; font-size: 27.350px; }
.icol { width: 381px; margin-right: 3px; }
.icol.wide { width: 384px; margin-right: 0; }
.half { height: 7px; margin-bottom: 4px; overflow: hidden; color: #fff; display: flex; align-items: flex-end; padding-left: 8px; }
.half span { line-height: 40px; }
.cell { height: 40px; line-height: 41px; margin-bottom: 4px; padding-left: 7px; color: #fdf3f3; white-space: nowrap; box-shadow: 0 0 2px #eee; }
.cell.teal { color: #2b5556; }
.cell.last { width: 768px; margin: 0; padding-left: 8px; }
.marks { position: absolute; left: 0; top: 0; width: 2554px; height: 1391px; }
.note { position: absolute; background: #ffeb5c; color: #f00; white-space: nowrap; }
.stackpos { left: 200px; top: 150px; width: 454px; height: 83px; font-size: 62px; line-height: 79px; padding-left: 4px; }
.time { left: 477px; top: 1301px; width: 165px; height: 73px; font-size: 62px; line-height: 66px; padding-left: 9px; }
```
